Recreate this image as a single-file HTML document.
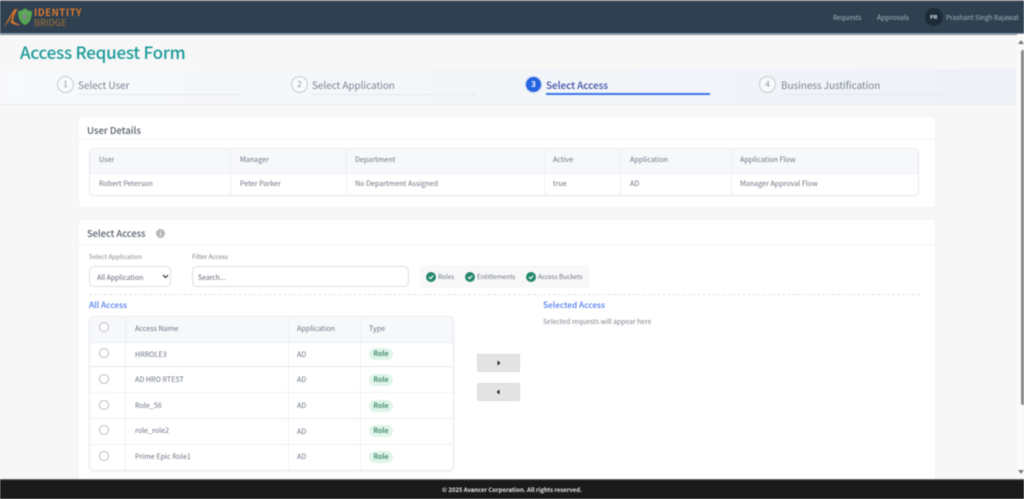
<!DOCTYPE html>
<html lang="en"><head><meta charset="utf-8"><title>Access Request Form</title>
<style>
html,body{margin:0;padding:0;width:1024px;height:499px;overflow:hidden;background:#f7f7f7}
body{position:relative;font-family:"Noto Sans CJK JP","Liberation Sans",sans-serif;color:#5b6472}
#w{position:absolute;left:0;top:0;width:1024px;height:499px;filter:blur(.4px)}
.a{position:absolute}
.x{position:absolute;white-space:nowrap;line-height:12px;font-family:"Noto Sans CJK JP","Liberation Sans",sans-serif;font-size:7.15px;color:#6a7280}
.step{position:absolute;top:76px;width:17px;height:17px;box-sizing:border-box;border:1px solid #c6ccd4;border-radius:50%;font:8px/15px "Noto Sans CJK JP",sans-serif;text-align:center;color:#8b94a0;background:#f8f9fb}
.sl{position:absolute;top:77px;font:10px/15px "Noto Sans CJK JP",sans-serif;letter-spacing:-.07px;color:#7b8494;white-space:nowrap}
.su{position:absolute;top:94px;height:1px;width:164px;background:#e4e8ef}
.card{position:absolute;left:79px;width:856px;background:#fff;border-radius:3px;box-shadow:0 0 2px rgba(0,0,0,.06)}
.ln{position:absolute;background:#eef0f4}
.radio{position:absolute;width:10px;height:10px;box-sizing:border-box;border:1px solid #b9bdc2;border-radius:50%;background:#fff}
.pill{position:absolute;left:369px;width:24px;height:12px;border-radius:6px;background:#dff5ea;color:#2d7a5c;font:500 7.2px/12px "Noto Sans CJK JP",sans-serif;text-align:center}
.btn{position:absolute;left:477px;width:43px;height:18px;background:#e4e4e4;border:1px solid #dadada;box-sizing:border-box;border-radius:2px}
.chk{position:absolute;top:272px;width:10px;height:10px;border-radius:50%;background:#23876b}
</style></head><body><div id="w">

<div class="a" style="left:0;top:0;width:1024px;height:1px;background:#9a9a9a"></div>
<div class="a" style="left:0;top:1px;width:1024px;height:32px;background:#2f4051"></div>
<div class="a" style="left:0;top:33px;width:1024px;height:1.5px;background:#8795a3"></div>

<svg class="a" style="left:0;top:0" width="36" height="30" viewBox="0 0 36 30">
<path d="M4 27 C8 20 11 13 15 9 L17.5 9 C15 13 13.5 18 13 21 C15 23 18 24 21 25 C17 25.5 13 24.5 10.5 22.5 C11.5 19 12.5 16 14 12.5 C11 17 8 23 4 27Z" fill="#d9752a"/>
<path d="M25 8 C27 10 29 11 32 11 C32 18 30 23 25 25 C20 23 18 18 18 11 C21 11 23 10 25 8Z" fill="#55a84f"/>
<rect x="22.5" y="15" width="5" height="4.5" rx=".8" fill="#7d8a80"/><path d="M23.5 15 V13.5 A1.5 1.5 0 0 1 26.5 13.5 V15" fill="none" stroke="#8c9a90" stroke-width=".9"/>
</svg>
<div class="x" style="left:34px;top:6px;font:bold 9.6px/12px 'Noto Sans CJK JP',sans-serif;letter-spacing:.55px;color:#d9792e">IDENTITY</div>
<div class="x" style="left:34px;top:17px;font:9.2px/11px 'Noto Sans CJK JP',sans-serif;color:#a5722f">BRIDGE</div>

<div class="x" style="left:833px;top:11px;color:#a9b4bf;font-size:6.7px">Requests</div>
<div class="x" style="left:877px;top:11px;color:#a9b4bf;font-size:6.9px">Approvals</div>
<div class="a" style="left:925px;top:8px;width:18px;height:18px;border-radius:50%;background:#1c2b38"></div>
<div class="x" style="left:930px;top:11px;color:#dfe6ec;font-size:5.4px;font-weight:bold">PR</div>
<div class="x" style="left:946px;top:11px;color:#a9b4bf;font-size:6.6px">Prashant Singh Rajawat</div>

<div class="a" style="left:20px;top:40px;font:500 17px/24px 'Noto Sans CJK JP',sans-serif;letter-spacing:-.22px;color:#1c9a9a;white-space:nowrap">Access Request Form</div>

<div class="a" style="left:0;top:69px;width:1016px;height:36px;background:linear-gradient(90deg,#f8f9fb,#eef2f7);border-bottom:1px solid #e9ebee;box-sizing:border-box"></div>
<div class="step" style="left:57px">1</div><div class="sl" style="left:78px">Select User</div><div class="su" style="left:78px"></div>
<div class="step" style="left:291px">2</div><div class="sl" style="left:312px">Select Application</div><div class="su" style="left:312px"></div>
<div class="step" style="left:526px;width:15px;height:15px;top:77px;border:0;line-height:15px;background:#2563e0;color:#fff;font-weight:bold;box-shadow:0 0 2px #7fa2ea">3</div><div class="sl" style="left:546px;color:#3e4fa8;font-weight:500">Select Access</div><div class="su" style="left:546px;background:#3b74e8;height:2px;top:93px"></div>
<div class="step" style="left:759px">4</div><div class="sl" style="left:781px">Business Justification</div><div class="su" style="left:781px"></div>

<div class="card" style="top:117px;height:90px"></div>
<div class="ln" style="left:79px;top:139px;width:856px;height:1px;background:#f0f1f3"></div>
<div class="x" style="left:87px;top:124px;font-size:9.5px;font-weight:500;color:#555d68">User Details</div>

<div class="a" style="left:89px;top:148px;width:830px;height:48px;box-sizing:border-box;border:1px solid #e8eaef;border-radius:5px;overflow:hidden;background:#fff;box-shadow:0 1px 1px rgba(0,0,0,.04)">
<div class="a" style="left:0;top:0;width:830px;height:24px;background:#f7f8fa;border-bottom:1px solid #e9ecf1"></div></div>
<div class="ln" style="left:230px;top:149px;width:1px;height:46px"></div>
<div class="ln" style="left:346px;top:149px;width:1px;height:46px"></div>
<div class="ln" style="left:544px;top:149px;width:1px;height:46px"></div>
<div class="ln" style="left:620px;top:149px;width:1px;height:46px"></div>
<div class="ln" style="left:731px;top:149px;width:1px;height:46px"></div>
<div class="x" style="left:99px;top:154px">User</div><div class="x" style="left:240px;top:154px">Manager</div><div class="x" style="left:355px;top:154px">Department</div><div class="x" style="left:553px;top:154px">Active</div><div class="x" style="left:630px;top:154px">Application</div><div class="x" style="left:740px;top:154px">Application Flow</div>
<div class="x" style="left:99px;top:178px">Robert Peterson</div><div class="x" style="left:240px;top:178px">Peter Parker</div><div class="x" style="left:355px;top:178px">No Department Assigned</div><div class="x" style="left:553px;top:178px">true</div><div class="x" style="left:630px;top:178px">AD</div><div class="x" style="left:740px;top:178px">Manager Approval Flow</div>

<div class="card" style="top:220px;height:262px"></div>
<div class="ln" style="left:79px;top:244px;width:856px;height:1px;background:#f0f1f3"></div>
<div class="x" style="left:87px;top:227px;font-size:9.3px;font-weight:500;color:#555d68">Select Access</div>
<div class="a" style="left:156px;top:229px;width:9px;height:9px;border-radius:50%;background:#b3b6ba;color:#fff;font:bold 6px/9px 'Noto Sans CJK JP',sans-serif;text-align:center">i</div>

<div class="x" style="left:89px;top:251px;font-size:6.3px;color:#858b94">Select Application</div>
<div class="x" style="left:192px;top:251px;font-size:6.3px;color:#7a808a">Filter Access</div>
<div class="a" style="left:89px;top:266px;width:82px;height:21px;box-sizing:border-box;border:1px solid #dcdfe4;border-radius:5px;background:#fff"></div>
<div class="x" style="left:97px;top:271px;font-size:6.9px;color:#5d6570">All Application</div>
<svg class="a" style="left:162px;top:274px" width="7" height="5" viewBox="0 0 7 5"><path d="M1 1 L3.5 3.5 L6 1" fill="none" stroke="#333" stroke-width="1.2"/></svg>
<div class="a" style="left:192px;top:266px;width:217px;height:21px;box-sizing:border-box;border:1px solid #dcdfe4;border-radius:5px;background:#fff"></div>
<div class="x" style="left:198px;top:271px;font-size:6.9px;color:#5d6570">Search...</div>

<div class="a" style="left:420px;top:265px;width:170px;height:23px;background:#f8f8f9;border-radius:5px"></div>
<div class="chk" style="left:426px"></div><div class="chk" style="left:465px"></div><div class="chk" style="left:526px"></div>
<svg class="a" style="left:426px;top:272px" width="110" height="10" viewBox="0 0 110 10" fill="none" stroke="#fff" stroke-width="1.2"><path d="M3 5 L4.5 6.6 L7.2 3.6"/><path d="M42 5 L43.5 6.6 L46.2 3.6"/><path d="M103 5 L104.5 6.6 L107.2 3.6"/></svg>
<div class="x" style="left:438px;top:271px;font-size:6.4px">Roles</div>
<div class="x" style="left:477px;top:271px;font-size:6.4px">Entitlements</div>
<div class="x" style="left:538px;top:271px;font-size:6.4px">Access Buckets</div>

<div class="a" style="left:89px;top:294px;width:831px;border-top:1px dashed #e3e3e3"></div>
<div class="x" style="left:89px;top:299px;font-size:8.3px;font-weight:500;color:#4f7bf0">All Access</div>
<div class="x" style="left:543px;top:299px;font-size:8.3px;font-weight:500;color:#4f7bf0">Selected Access</div>
<div class="x" style="left:543px;top:315px;font-size:6.8px;color:#7c838c">Selected requests will appear here</div>

<div class="a" style="left:89px;top:316px;width:365px;height:155px;box-sizing:border-box;border:1px solid #e8eaef;border-radius:5px;background:#fff;box-shadow:0 1px 2px rgba(0,0,0,.06);overflow:hidden">
<div class="a" style="left:0;top:0;width:365px;height:25px;background:#f7f8fa;border-bottom:1px solid #e9ecf1"></div></div>
<div class="ln" style="left:125px;top:317px;width:1px;height:153px"></div>
<div class="ln" style="left:288px;top:317px;width:1px;height:153px"></div>
<div class="ln" style="left:360px;top:317px;width:1px;height:153px"></div>
<div class="ln" style="left:90px;top:366px;width:363px;height:1px;background:#e6e8ec"></div>
<div class="ln" style="left:90px;top:392px;width:363px;height:1px;background:#f0f1f4"></div>
<div class="ln" style="left:90px;top:418px;width:363px;height:1px;background:#eceef1"></div>
<div class="ln" style="left:90px;top:444px;width:363px;height:1px;background:#eceef1"></div>

<div class="radio" style="left:98.5px;top:322px"></div>
<div class="x" style="left:135px;top:323px">Access Name</div><div class="x" style="left:297px;top:323px">Application</div><div class="x" style="left:369px;top:323px">Type</div>

<div class="radio" style="left:98.5px;top:348px"></div><div class="x" style="left:135px;top:349px">HRROLE3</div><div class="x" style="left:297px;top:349px">AD</div><div class="pill" style="top:348px">Role</div>
<div class="radio" style="left:98.5px;top:374px"></div><div class="x" style="left:135px;top:374px">AD HRO RTEST</div><div class="x" style="left:297px;top:374px">AD</div><div class="pill" style="top:374px">Role</div>
<div class="radio" style="left:98.5px;top:400px"></div><div class="x" style="left:135px;top:400px">Role_56</div><div class="x" style="left:297px;top:400px">AD</div><div class="pill" style="top:400px">Role</div>
<div class="radio" style="left:98.5px;top:425px"></div><div class="x" style="left:135px;top:425px">role_role2</div><div class="x" style="left:297px;top:426px">AD</div><div class="pill" style="top:425px">Role</div>
<div class="radio" style="left:98.5px;top:451px"></div><div class="x" style="left:135px;top:451px">Prime Epic Role1</div><div class="x" style="left:297px;top:451px">AD</div><div class="pill" style="top:451px">Role</div>

<div class="btn" style="top:354px"></div>
<svg class="a" style="left:496px;top:360px" width="6" height="6" viewBox="0 0 6 6"><path d="M1.5 .5 L4.5 3 L1.5 5.5Z" fill="#222"/></svg>
<div class="btn" style="top:383px"></div>
<svg class="a" style="left:495px;top:389px" width="6" height="6" viewBox="0 0 6 6"><path d="M4.5 .5 L1.5 3 L4.5 5.5Z" fill="#222"/></svg>

<div class="a" style="left:1017px;top:34px;width:7px;height:446px;background:#fbfbfb"></div>
<div class="a" style="left:1021px;top:50px;width:3px;height:355px;background:#8b8b8b;border-radius:2px 0 0 2px"></div>
<svg class="a" style="left:1018px;top:39px" width="6" height="6"><path d="M0 5 L3 1 L6 5Z" fill="#777"/></svg>
<svg class="a" style="left:1018px;top:469px" width="6" height="6"><path d="M0 1 L3 5 L6 1Z" fill="#777"/></svg>

<div class="a" style="left:0;top:479px;width:1024px;height:20px;background:#1a1a1a;border-top:1px solid #6a6a6a;box-sizing:border-box"></div>
<div class="x" style="left:412px;top:484px;color:#e6e6e6;font-size:5.95px;font-weight:700;width:200px;text-align:center">© 2025 Avancer Corporation. All rights reserved.</div>
</div></body></html>
